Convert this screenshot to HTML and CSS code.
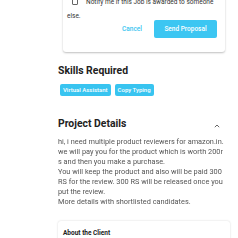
FILE: index.html
```html
<!DOCTYPE html>
<html>
<head>
<meta charset="utf-8">
<link rel="stylesheet" href="styles.css">
</head>
<body>
<div class="page">
  <div class="modal">
    <p class="notify"><span class="checkbox"></span>Notify me if this Job is awarded to someone else.</p>
    <div class="actions">
      <span class="cancel">Cancel</span>
      <span class="send">Send Proposal</span>
    </div>
  </div>

  <h2 class="heading skills-heading">Skills Required</h2>
  <div class="tags">
    <span class="tag">Virtual Assistant</span>
    <span class="tag">Copy Typing</span>
  </div>

  <div class="project-head">
    <h2 class="heading">Project Details</h2>
    <svg class="chevron" width="6" height="4" viewBox="0 0 6 4"><polyline points="0.8,3.2 3,1 5.2,3.2" fill="none" stroke="#555" stroke-width="0.9"/></svg>
  </div>
  <p class="details">hi, i need multiple product reviewers for amazon.in.
we will pay you for the product which is worth 200rs and then you make a purchase.
You will keep the product and also will be paid 300 RS for the review. 300 RS will be released once you put the review.
More details with shortlisted candidates.</p>

  <div class="client">
    <h3 class="client-title">About the Client</h3>
  </div>
</div>
</body>
</html>
```
FILE: styles.css
```css
* { box-sizing: border-box; }
html, body { margin: 0; padding: 0; background: #fff; }
body { font-family: Roboto, "Liberation Sans", sans-serif; color: #222; overflow: hidden; height: 238px; -webkit-font-smoothing: antialiased; }
.page { padding-left: 58px; width: 230px; }

.modal {
  margin: -5px 5px 0 5px;
  padding: 0 6px 14px 4px;
  background: #fff;
  border-radius: 0 0 3px 3px;
  box-shadow: 0 1px 2px rgba(0,0,0,0.25);
}
.notify {
  margin: 0;
  padding-right: 2px;
  font-size: 6.5px;
  line-height: 14px;
  color: #333;
}
.checkbox {
  display: inline-block;
  width: 6px; height: 6px;
  border: 1px solid #666;
  border-radius: 1px;
  margin: 0 8px 0 5px;
  vertical-align: -1px;
}
.actions {
  margin-top: -3px;
  padding-right: 2px;
  display: flex;
  justify-content: flex-end;
  align-items: center;
  gap: 12px;
}
.cancel { font-size: 6.5px; color: #3bc5f0; font-weight: 500; }
.send {
  display: flex; align-items: center; justify-content: center;
  width: 63px; height: 18px;
  background: #3cc6f2;
  border-radius: 2px;
  color: #fff; font-size: 6.5px; font-weight: 500;
}

.heading { margin: 0; font-size: 10.4px; line-height: 12px; font-weight: 700; color: #222; }
.skills-heading { margin-top: 12.6px; }
.tags { display: flex; gap: 4px; margin-top: 7.4px; padding-left: 2px; }
.tag {
  height: 12px; line-height: 12px;
  padding: 0 3px;
  background: #38c4f0;
  border-radius: 2px;
  color: #fff; font-size: 6px; font-weight: 500;
}
.project-head {
  margin-top: 21.6px;
  display: flex; justify-content: space-between; align-items: center;
  padding-right: 10px;
}
.chevron { display: block; margin-top: 5px; }
.details {
  margin: 7.5px 0 0 0;
  width: 168px;
  font-size: 7.35px; line-height: 10px;
  color: #555;
  white-space: pre-line;
  word-break: break-all;
  will-change: transform;
}
.client {
  margin-top: 14.4px;
  height: 40px;
  padding: 8px 5px;
  border-radius: 3px;
  box-shadow: 0 0 2px rgba(0,0,0,0.18);
}
.client-title { margin: 0; font-size: 6.5px; line-height: 8px; font-weight: 700; color: #222; }
```
